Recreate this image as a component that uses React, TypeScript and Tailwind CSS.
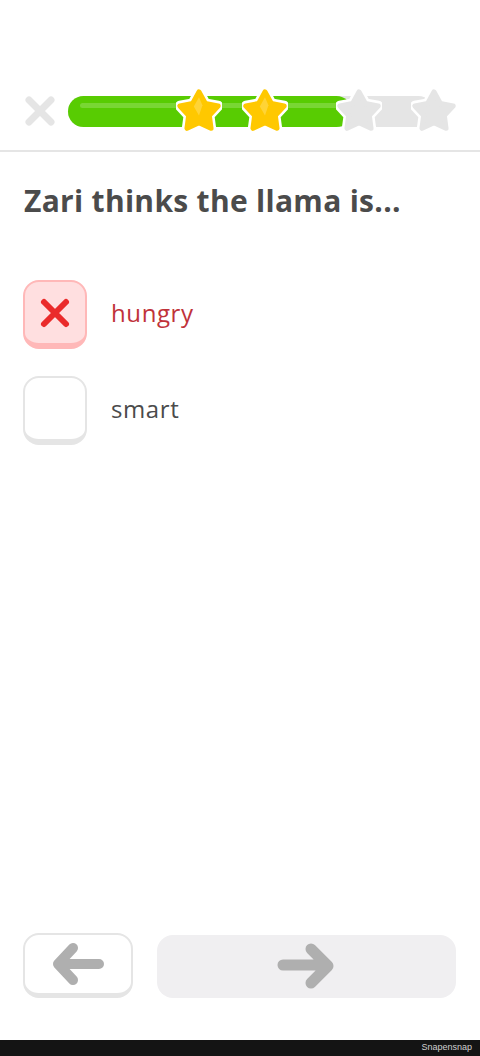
import React from "react";

const STAR = "20,3.5 25.6,13.6 36.6,15.6 28.9,23.8 30.4,35 20,30.1 9.6,35 11.1,23.8 3.4,15.6 14.4,13.6";

function Star({ filled, x }: { filled: boolean; x: number }) {
  return (
    <svg
      width="46"
      height="46"
      viewBox="0 0 40 40"
      className="absolute top-1/2 -translate-y-1/2 -translate-x-1/2"
      style={{ left: x }}
    >
      <polygon points={STAR} fill="#ffffff" stroke="#ffffff" strokeWidth="9" strokeLinejoin="round" />
      <polygon
        points={STAR}
        fill={filled ? "#ffc800" : "#e5e5e5"}
        stroke={filled ? "#ffc800" : "#e5e5e5"}
        strokeWidth="4.5"
        strokeLinejoin="round"
      />
      {filled && (
        <polygon points="20,8 23,15 20,24 15.5,16" fill="#ffd84d" opacity="0.7" />
      )}
    </svg>
  );
}

function CloseIcon() {
  return (
    <svg width="32" height="32" viewBox="0 0 32 32">
      <path d="M5 5 L27 27 M27 5 L5 27" stroke="#e5e5e5" strokeWidth="7" strokeLinecap="round" />
    </svg>
  );
}

function ArrowLeft() {
  return (
    <svg width="56" height="44" viewBox="0 0 56 44">
      <path
        d="M49 22 H9 M23 6 L8 22 L23 38"
        fill="none"
        stroke="#afafaf"
        strokeWidth="10"
        strokeLinecap="round"
        strokeLinejoin="round"
      />
    </svg>
  );
}

function ArrowRight() {
  return (
    <svg width="60" height="48" viewBox="0 0 60 48">
      <path
        d="M6 22 H50 M34 6 L51 23 L34 40"
        fill="none"
        stroke="#afafaf"
        strokeWidth="11"
        strokeLinecap="round"
        strokeLinejoin="round"
      />
    </svg>
  );
}

type Choice = { label: string; wrong?: boolean };

const choices: Choice[] = [
  { label: "hungry", wrong: true },
  { label: "smart" },
];

export default function App() {
  return (
    <div
      className="w-[480px] h-[1056px] bg-white flex flex-col"
      style={{ fontFamily: "'Open Sans', 'Noto Sans', sans-serif" }}
    >
      {/* header */}
      <div className="pt-[95px] pl-[24px] pr-[30px] flex items-center gap-[12px]">
        <CloseIcon />
        <div className="relative flex-1 h-[31px]">
          <div className="absolute inset-0 right-[16px] rounded-full bg-[#e5e5e5]" />
          <div className="absolute left-0 top-0 bottom-0 w-[284px] rounded-full bg-[#58cc02]">
            <div className="mx-[12px] mt-[7px] h-[5px] rounded-full bg-[#79d634]" />
          </div>
          <Star filled x={131} />
          <Star filled x={197} />
          <Star filled={false} x={291} />
          <Star filled={false} x={366} />
        </div>
      </div>

      <div className="mt-[23px] h-[2px] bg-[#e5e5e5]" />

      <h1 className="mt-[28px] px-[24px] text-[30px] leading-[42px] font-bold text-[#4b4b4b] tracking-[0.3px]">
        Zari thinks the llama is...
      </h1>

      <div className="mt-[58px] px-[23px] flex flex-col gap-[27px]">
        {choices.map((c) => (
          <div key={c.label} className="flex items-center gap-[24px]">
            <div
              className={
                c.wrong
                  ? "w-[64px] h-[69px] rounded-[16px] border-2 border-b-[6px] border-[#ffb8b8] bg-[#ffdfe0] flex items-center justify-center"
                  : "w-[64px] h-[69px] rounded-[16px] border-2 border-b-[6px] border-[#e5e5e5] bg-white"
              }
            >
              {c.wrong && (
                <svg width="34" height="34" viewBox="0 0 34 34">
                  <path d="M6 6 L28 28 M28 6 L6 28" stroke="#ea2b2b" strokeWidth="6" strokeLinecap="round" />
                </svg>
              )}
            </div>
            <span
              className={
                c.wrong
                  ? "text-[24px] text-[#c0323a] tracking-[0.6px] -mt-[3px]"
                  : "text-[24px] text-[#4b4b4b] tracking-[0.6px] -mt-[3px]"
              }
            >
              {c.label}
            </span>
          </div>
        ))}
      </div>

      <div className="flex-1" />

      {/* footer buttons */}
      <div className="px-[23px] pr-[24px] flex items-start gap-[24px] mb-[42px]">
        <button className="w-[110px] h-[65px] rounded-[16px] border-2 border-b-[5px] border-[#e5e5e5] bg-white flex items-center justify-center">
          <ArrowLeft />
        </button>
        <button className="flex-1 mt-[2px] h-[63px] rounded-[16px] bg-[#f0eff1] flex items-center justify-center">
          <ArrowRight />
        </button>
      </div>

      <div className="h-[16px] bg-[#141414] flex items-center justify-end pr-[8px]">
        <span className="text-[9px] text-[#d0d0d0]" style={{ fontFamily: "'Liberation Sans', sans-serif" }}>
          Snapensnap
        </span>
      </div>
    </div>
  );
}
